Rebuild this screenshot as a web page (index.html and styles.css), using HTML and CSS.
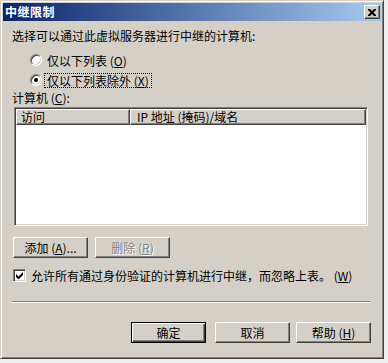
FILE: index.html
```html
<!DOCTYPE html>
<html lang="zh-CN">
<head>
<meta charset="utf-8">
<title>中继限制</title>
<link rel="stylesheet" href="styles.css">
</head>
<body>
<div class="window">
  <div class="titlebar">
    <span class="title">中继限制</span>
    <span class="close"><svg width="8" height="7" viewBox="0 0 8 7"><path d="M0 0h2l2 2 2-2h2v1l-2.5 2.5L8 6v1H6L4 5 2 7H0V6l2.5-2.5L0 1z" fill="#000"/></svg></span>
  </div>
  <div class="content">
    <div class="label top">选择可以通过此虚拟服务器进行中继的计算机:</div>
    <div class="radio-row r1"><span class="radio"></span><span class="rtext">仅以下列表 (<u>O</u>)</span></div>
    <div class="radio-row r2"><span class="radio checked"></span><span class="rtext focus">仅以下列表除外 (<u>X</u>)</span></div>
    <div class="label comp">计算机 (<u>C</u>):</div>
    <div class="list">
      <div class="header">
        <div class="col c1">访问</div>
        <div class="col c2">IP 地址 (掩码)/域名</div>
      </div>
    </div>
    <div class="btnrow">
      <div class="btn">添加 (<u>A</u>)...</div>
      <div class="btn disabled">删除 (<u>R</u>)</div>
    </div>
    <div class="check-row">
      <span class="checkbox"><svg width="7" height="7" viewBox="0 0 7 7"><path d="M0 2v3l2 2h1l4-4V0L2.5 4.5z" fill="#000"/></svg></span>
      <span class="ctext">允许所有通过身份验证的计算机进行中继，而忽略上表。 (<u>W</u>)</span>
    </div>
    <div class="separator"></div>
    <div class="actions">
      <div class="btn default">确定</div>
      <div class="btn cancel">取消</div>
      <div class="btn help">帮助 (<u>H</u>)</div>
    </div>
  </div>
</div>
</body>
</html>
```

FILE: styles.css
```css
* { box-sizing: border-box; }
html, body {
  margin: 0;
  padding: 0;
  background: #eeeeee;
}
body {
  font-family: "Noto Sans CJK SC", "Noto Sans", sans-serif;
  font-size: 12px;
  color: #000;
}
.window {
  width: 384px;
  height: 359px;
  background: #d4d0c8;
  border: 1px solid;
  border-color: #d4d0c8 #404040 #404040 #d4d0c8;
  box-shadow: inset 1px 1px #ffffff, inset -1px -1px #808080;
  padding: 2px;
  display: flex;
  flex-direction: column;
}
.titlebar {
  height: 18px;
  background: linear-gradient(to right, #0a246a, #a6caf0);
  display: flex;
  align-items: center;
  justify-content: space-between;
  padding-left: 2px;
  flex: none;
}
.title {
  color: #fff;
  font-weight: bold;
  font-size: 12px;
  line-height: 14px;
  letter-spacing: 0.5px;
}
.close {
  width: 16px;
  height: 14px;
  margin-right: 1px;
  background: #d4d0c8;
  border: 1px solid;
  border-color: #fff #404040 #404040 #fff;
  box-shadow: inset -1px -1px #808080;
  display: flex;
  align-items: center;
  justify-content: center;
}
.close svg { display: block; margin-left: -1px; }
.content {
  flex: 1;
  display: flex;
  flex-direction: column;
  padding: 0 10px 0 9px;
}
.label {
  line-height: 13px;
  height: 13px;
  white-space: nowrap;
}
.label.top { margin-top: 8px; }
.label.comp { margin-top: 4px; }
.radio-row {
  display: flex;
  align-items: center;
  height: 14px;
  padding-left: 18px;
}
.radio-row.r1 { margin-top: 11px; }
.radio-row.r2 { margin-top: 6px; }
.radio {
  width: 12px;
  height: 12px;
  border-radius: 50%;
  background: #fff;
  border: 1px solid;
  border-color: #808080 #ffffff #ffffff #808080;
  box-shadow: inset 1px 1px #404040, inset -1px -1px #d4d0c8;
  display: flex;
  align-items: center;
  justify-content: center;
  flex: none;
}
.radio.checked::after {
  content: "";
  width: 4px;
  height: 4px;
  border-radius: 50%;
  background: #000;
}
.rtext {
  margin-left: 3px;
  padding: 0 2px;
  line-height: 13px;
  white-space: nowrap;
}
.rtext.focus {
  outline: 1px dotted #000;
  outline-offset: 0;
}
.list {
  margin-top: 3px;
  margin-left: 2px;
  width: 354px;
  height: 119px;
  background: #fff;
  border: 1px solid;
  border-color: #808080 #ffffff #ffffff #808080;
  box-shadow: inset 1px 1px #404040, inset -1px -1px #d4d0c8;
  padding: 1px;
  flex: none;
}
.header {
  display: flex;
  height: 16px;
}
.col {
  height: 16px;
  background: #d4d0c8;
  border: 1px solid;
  border-color: #ffffff #404040 #404040 #ffffff;
  box-shadow: inset -1px -1px #808080;
  line-height: 13px;
  white-space: nowrap;
}
.col.c1 { width: 114px; padding-left: 4px; }
.col.c2 { flex: 1; padding-left: 6px; }
.btnrow {
  display: flex;
  margin-top: 11px;
  margin-left: 1px;
  gap: 7px;
}
.btn {
  width: 75px;
  height: 21px;
  background: #d4d0c8;
  border: 1px solid;
  border-color: #ffffff #404040 #404040 #ffffff;
  box-shadow: inset -1px -1px #808080;
  display: flex;
  align-items: center;
  justify-content: center;
  line-height: 13px;
  white-space: nowrap;
  flex: none;
}
.btn.disabled {
  color: #808080;
  text-shadow: 1px 1px #ffffff;
}
.btn.default {
  border: 1px solid #000;
  box-shadow: inset 1px 1px #ffffff, inset -1px -1px #404040, inset -2px -2px #808080;
}
.check-row {
  display: flex;
  align-items: center;
  margin-top: 10px;
  margin-left: 1px;
  height: 14px;
}
.checkbox {
  width: 13px;
  height: 13px;
  background: #fff;
  border: 1px solid;
  border-color: #808080 #ffffff #ffffff #808080;
  box-shadow: inset 1px 1px #404040, inset -1px -1px #d4d0c8;
  display: flex;
  align-items: center;
  justify-content: center;
  flex: none;
}
.ctext {
  margin-left: 5px;
  line-height: 13px;
  white-space: nowrap;
}
.separator {
  margin-top: 19px;
  height: 2px;
  border-top: 1px solid #808080;
  border-bottom: 1px solid #ffffff;
  margin-right: 1px;
}
.actions {
  display: flex;
  justify-content: flex-end;
  margin-top: 19px;
}
.btn.cancel { margin-left: 9px; }
.btn.help { margin-left: 6px; }
```
